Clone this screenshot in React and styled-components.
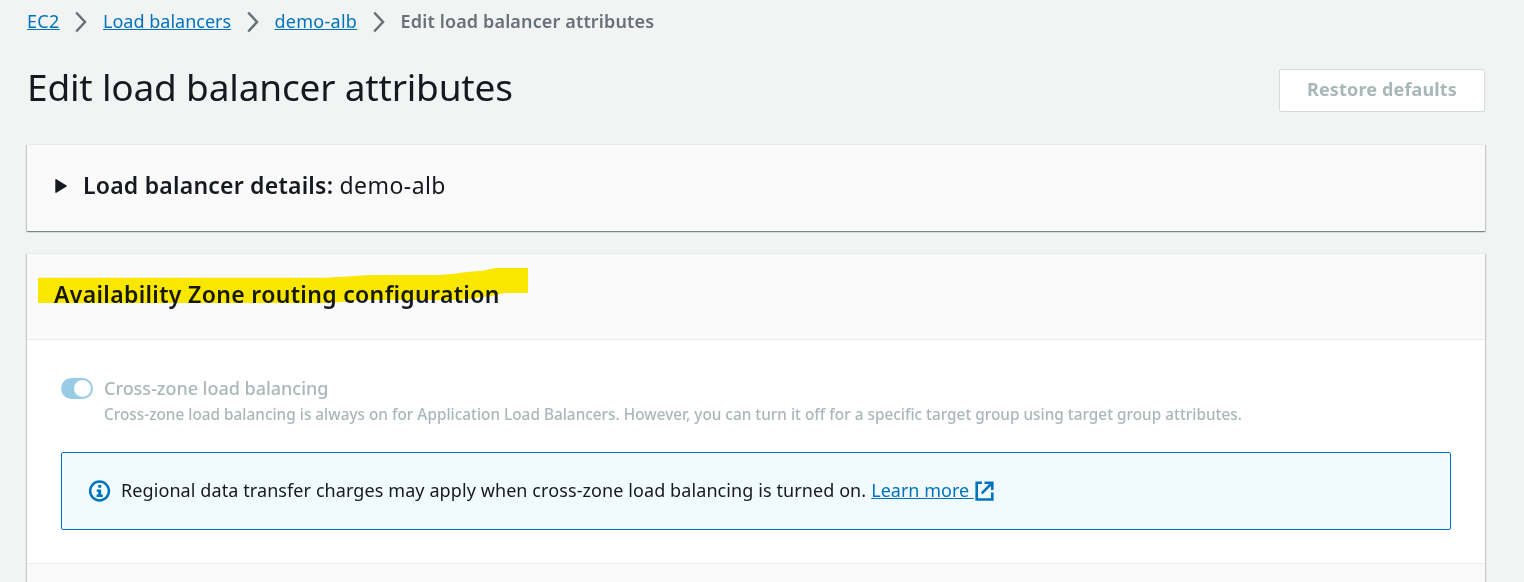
import React from 'react';
import styled, { createGlobalStyle } from 'styled-components';

const GlobalStyle = createGlobalStyle`
  *, *::before, *::after { box-sizing: border-box; }
  body {
    margin: 0;
    background: #f2f4f4;
    color: #16191f;
    font-family: "Noto Sans", "Open Sans", sans-serif;
    font-size: 18px;
    overflow: hidden;
  }
  h1, h2, p { margin: 0; font-weight: 400; }
`;

const Page = styled.main`
  height: 582px;
  padding: 10px 39px 0 27px;
  overflow: hidden;
`;

const Breadcrumbs = styled.nav`
  display: flex;
  align-items: center;
  gap: 15.7px;
  height: 23px;
`;

const Link = styled.a`
  color: #0073bb;
  line-height: 23px;
  letter-spacing: ${(p) => p.$tracking || 0}px;
  text-decoration: underline;
  text-decoration-thickness: 1px;
  text-underline-offset: 1px;
  white-space: pre;
`;

const CurrentCrumb = styled.span`
  color: #687078;
  font-weight: 600;
  line-height: 23px;
  letter-spacing: 0.14px;
`;

const TitleRow = styled.header`
  display: flex;
  align-items: flex-start;
  justify-content: space-between;
  height: 75px;
  margin-top: 36px;
`;

const Title = styled.h1`
  font-size: 37px;
  line-height: 36px;
  letter-spacing: -0.18px;
`;

const Button = styled.button`
  width: 206px;
  height: 43px;
  padding: 0 0 3px;
  border: 1px solid #d5dbdb;
  border-radius: 2px;
  background: #fff;
  color: #aab7b8;
  font: 700 18px "Noto Sans", "Open Sans", sans-serif;
  letter-spacing: 0.16px;
`;

const Card = styled.section`
  margin-bottom: 22px;
  border-top: 1px solid #eaeded;
  background: #fff;
  box-shadow: 0 1px 1px 0 rgba(0, 28, 36, 0.3), 1px 1px 1px 0 rgba(0, 28, 36, 0.15),
    -1px 1px 1px 0 rgba(0, 28, 36, 0.15);
`;

const CardHeader = styled.div`
  position: relative;
  display: flex;
  align-items: center;
  height: 86px;
  padding: 0 27px ${(p) => (p.$divided ? 5 : 6)}px;
  border-bottom: ${(p) => (p.$divided ? '1px solid #eaeded' : '0')};
  background: #fafafa;
`;

const NextHeader = styled.div`
  height: 86px;
  border-top: 1px solid #eaeded;
  background: #fafafa;
`;

const CardTitle = styled.h2`
  font-size: 23px;
  font-weight: 600;
  line-height: 30px;
  letter-spacing: ${(p) => p.$tracking}px;
`;

const CardTitleValue = styled.span`
  font-weight: 400;
  letter-spacing: 0.45px;
`;

const Caret = styled.svg`
  flex: none;
  margin: 2px 15px 0 1px;
`;

const Marker = styled.svg`
  position: absolute;
  left: 11px;
  top: 13px;
  mix-blend-mode: multiply;
  pointer-events: none;
`;

const CardBody = styled.div`
  height: 223px;
  padding: 36px 34px 0;
`;

const ToggleField = styled.label`
  display: flex;
  gap: 11px;
  color: #aab7b8;
`;

const ToggleTrack = styled.span`
  display: flex;
  flex: none;
  align-items: center;
  justify-content: flex-end;
  width: 32px;
  height: 21px;
  margin-top: 2px;
  padding-right: 2px;
  border-radius: 11px;
  background: #99cbe4;
`;

const ToggleKnob = styled.span`
  width: 17px;
  height: 17px;
  border-radius: 50%;
  background: #fff;
`;

const ToggleLabel = styled.p`
  font-weight: 500;
  line-height: 24px;
  letter-spacing: -0.02px;
`;

const ToggleDescription = styled.p`
  margin-top: 3px;
  font-size: 15.3px;
  font-weight: 500;
  line-height: 22px;
  letter-spacing: 0.025px;
  white-space: nowrap;
`;

const Alert = styled.div`
  display: flex;
  align-items: center;
  height: 78px;
  margin-top: 27px;
  padding: 0 27px;
  border: 1px solid #0073bb;
  border-radius: 2px;
  background: #f1faff;
`;

const AlertText = styled.p`
  margin: -2px 5px 0 10px;
  letter-spacing: 0.09px;
  line-height: 24px;
`;

const AlertLink = styled(Link)`
  margin-top: -2px;
`;

const Chevron = () => (
  <svg width="12" height="22" viewBox="0 0 12 22" fill="none" stroke="#687078" strokeWidth="2.5">
    <path d="M1.2 1.5 10 11 1.2 20.5" />
  </svg>
);

const InfoIcon = () => (
  <svg width="22" height="22" viewBox="0 0 22 22">
    <circle cx="10.5" cy="11" r="9.4" fill="none" stroke="#0073bb" strokeWidth="2.5" />
    <path fill="#0073bb" d="M9.2 5h3v2.8h-3zM7.7 9.4h4.5v5.2h1.6V17H7.6v-2.4h1.6v-2.8H7.7z" />
  </svg>
);

const ExternalIcon = () => (
  <svg width="21" height="22" viewBox="0 0 21 22" fill="none" stroke="#0073bb" strokeWidth="2.6">
    <path d="M8 2.7H2.7v16.8h15.6V12.5M10.5 2.7h7.8v7.3M18 3 7.8 13.4" />
  </svg>
);

export default function App() {
  return (
    <Page>
      <GlobalStyle />
      <Breadcrumbs>
        <Link $tracking={0.33}>EC2</Link>
        <Chevron />
        <Link>Load balancers</Link>
        <Chevron />
        <Link $tracking={0.27}>demo-alb</Link>
        <Chevron />
        <CurrentCrumb>Edit load balancer attributes</CurrentCrumb>
      </Breadcrumbs>

      <TitleRow>
        <Title>Edit load balancer attributes</Title>
        <Button disabled>Restore defaults</Button>
      </TitleRow>

      <Card>
        <CardHeader>
          <Caret width="13" height="16" viewBox="0 0 13 16">
            <path
              d="M1 1.8v12.4L11.2 8z"
              fill="#16191f"
              stroke="#16191f"
              strokeWidth="1.4"
              strokeLinejoin="round"
            />
          </Caret>
          <CardTitle $tracking={0.22}>
            Load balancer details: <CardTitleValue>demo-alb</CardTitleValue>
          </CardTitle>
        </CardHeader>
      </Card>

      <Card>
        <CardHeader $divided>
          <CardTitle $tracking={0.33}>Availability Zone routing configuration</CardTitle>
          <Marker width="491" height="43" viewBox="0 0 491 43">
            <path
              fill="#ffec00"
              d="M0 10.7H285C305 10.2 320 8 345 8H401C418 7 428 4.5 442 4C450 3.5 452 1 461 1H490V26H470C462 26 460 28.5 452 29C440 30 432 33 415 33H325C305 35 300 36 270 36H0z"
            />
          </Marker>
        </CardHeader>
        <CardBody>
          <ToggleField>
            <ToggleTrack>
              <ToggleKnob />
            </ToggleTrack>
            <div>
              <ToggleLabel>Cross-zone load balancing</ToggleLabel>
              <ToggleDescription>
                Cross-zone load balancing is always on for Application Load Balancers. However, you
                can turn it off for a specific target group using target group attributes.
              </ToggleDescription>
            </div>
          </ToggleField>
          <Alert>
            <InfoIcon />
            <AlertText>
              Regional data transfer charges may apply when cross-zone load balancing is turned on.
            </AlertText>
            <AlertLink>Learn more </AlertLink>
            <ExternalIcon />
          </Alert>
        </CardBody>
        <NextHeader />
      </Card>
    </Page>
  );
}
